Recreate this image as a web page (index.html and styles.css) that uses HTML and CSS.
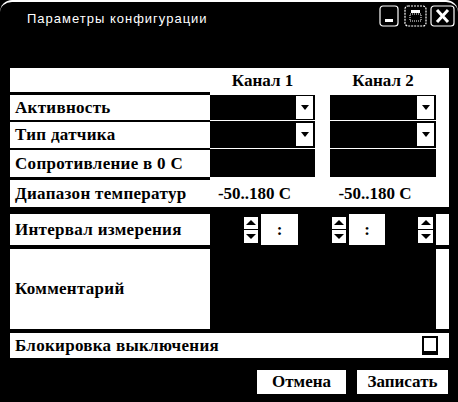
FILE: index.html
```html
<!DOCTYPE html>
<html lang="ru">
<head>
<meta charset="utf-8">
<title>Параметры конфигурации</title>
<link rel="stylesheet" href="styles.css">
</head>
<body>
<div class="window">
  <div class="titlebar">
    <span class="title">Параметры конфигурации</span>
    <div class="controls">
      <svg class="ctl ctl-min" width="20" height="22" viewBox="0 0 20 22">
        <rect x="1" y="1" width="18" height="20" rx="3" fill="none" stroke="#fff" stroke-width="1.2"/>
        <rect x="6" y="14" width="8" height="3" fill="#fff"/>
      </svg>
      <svg class="ctl ctl-max" width="23" height="22" viewBox="0 0 23 22">
        <rect x="1" y="1" width="21" height="20" rx="3" fill="none" stroke="#fff" stroke-width="1.2" stroke-dasharray="2 1"/>
        <rect x="7" y="5" width="9" height="3" fill="#fff"/>
        <rect x="6" y="9" width="11" height="7" fill="none" stroke="#fff" stroke-width="1" stroke-dasharray="1 1"/>
      </svg>
      <svg class="ctl ctl-close" width="25" height="22" viewBox="0 0 25 22">
        <rect x="1" y="1" width="23" height="20" rx="3" fill="none" stroke="#fff" stroke-width="1.2"/>
        <path d="M7 5 L18 17 M18 5 L7 17" stroke="#fff" stroke-width="3" fill="none"/>
      </svg>
    </div>
  </div>

  <div class="panel">
    <div class="row row-header">
      <div class="label"></div>
      <div class="fields pair">
        <span class="ch ch1">Канал 1</span>
        <span class="ch ch2">Канал 2</span>
      </div>
      <div class="strip"></div>
    </div>

    <div class="row row-combo first">
      <div class="label">Активность</div>
      <div class="fields pair">
        <div class="combo c1"><span class="drop"></span></div>
        <div class="combo c2"><span class="drop"></span></div>
      </div>
      <div class="strip"></div>
    </div>

    <div class="row row-combo">
      <div class="label">Тип датчика</div>
      <div class="fields pair">
        <div class="combo c1"><span class="drop"></span></div>
        <div class="combo c2"><span class="drop"></span></div>
      </div>
      <div class="strip"></div>
    </div>

    <div class="row row-combo tall">
      <div class="label">Сопротивление в 0 С</div>
      <div class="fields pair">
        <div class="combo c1"></div>
        <div class="combo c2"></div>
      </div>
      <div class="strip"></div>
    </div>

    <div class="row row-range">
      <div class="label">Диапазон температур</div>
      <div class="fields pair">
        <span class="ch val1">-50..180 C</span>
        <span class="ch val2">-50..180 C</span>
      </div>
      <div class="strip"></div>
    </div>

    <div class="row row-interval">
      <div class="label">Интервал измерения</div>
      <div class="fields time">
        <div class="spin s1"><span class="up"></span><span class="dn"></span></div>
        <div class="sep b1">:</div>
        <div class="spin s2"><span class="up"></span><span class="dn"></span></div>
        <div class="sep b2">:</div>
        <div class="spin s3"><span class="up"></span><span class="dn"></span></div>
      </div>
      <div class="strip"></div>
    </div>

    <div class="row row-comment">
      <div class="label">Комментарий</div>
      <div class="fields memo"></div>
      <div class="strip"></div>
    </div>

    <div class="row-lock">
      <div class="label">Блокировка выключения</div>
      <span class="check"></span>
    </div>
  </div>

  <div class="footer">
    <button class="btn btn-cancel">Отмена</button>
    <button class="btn btn-save">Записать</button>
  </div>
</div>
</body>
</html>
```

FILE: styles.css
```css
html, body {
  margin: 0;
  padding: 0;
  background: #000;
}

.window {
  width: 458px;
  height: 402px;
  box-sizing: border-box;
  background: #000;
  border-top: 2px solid #fff;
  border-radius: 12px 12px 0 0;
  display: flex;
  flex-direction: column;
  font-family: "Liberation Serif", "DejaVu Serif", "Noto Serif", serif;
  overflow: hidden;
}

.titlebar {
  height: 66px;
  box-sizing: border-box;
  padding: 3px 3px 0 27px;
  display: flex;
  justify-content: space-between;
  align-items: flex-start;
}

.title {
  margin-top: 6px;
  color: #fff;
  font-family: "Liberation Sans", Arial, sans-serif;
  font-size: 13px;
  letter-spacing: 1px;
  line-height: 15px;
}

.controls {
  display: flex;
  align-items: flex-start;
}

.ctl { display: block; }
.ctl-max { margin-left: 5px; }
.ctl-close { margin-left: 3px; }

.panel {
  margin-left: 10px;
  width: 439px;
  background: #fff;
}

.row {
  display: grid;
  grid-template-columns: 200px 226px 13px;
}

.label {
  display: flex;
  align-items: center;
  padding-left: 5px;
  box-sizing: border-box;
  font-family: "Liberation Serif", "DejaVu Serif", "Noto Serif", serif;
  font-weight: bold;
  font-size: 17px;
  letter-spacing: 0.3px;
  white-space: nowrap;
  color: #000;
}

.strip { background: #fff; }

/* header */
.row-header { height: 24px; }
.pair {
  display: flex;
  align-items: center;
}
.ch {
  font-family: "Liberation Serif", "DejaVu Serif", "Noto Serif", serif;
  font-weight: bold;
  font-size: 17px;
  text-align: center;
  white-space: nowrap;
}
.ch1, .val1 { width: 105px; }
.ch2, .val2 { width: 106px; margin-left: 15px; }
.row-header .ch { padding-top: 2px; }

/* combo rows */
.row-combo { height: 28px; }
.row-combo .label { border-top: 2px solid #000; }
.row-combo .fields { padding-top: 1px; align-items: stretch; }
.row-combo.first .label { border-top-width: 3px; }
.row-combo.first .fields { padding-top: 3px; }
.row-combo.tall { height: 29px; }

.combo {
  background: #000;
  display: flex;
  align-items: center;
  justify-content: flex-end;
  box-sizing: border-box;
  padding-right: 2px;
}
.combo.c1 { width: 105px; }
.combo.c2 { width: 106px; margin-left: 15px; }

.drop {
  width: 17px;
  height: 23px;
  background: #fff;
  display: flex;
  align-items: center;
  justify-content: center;
}
.drop::before {
  content: "";
  border-left: 4px solid transparent;
  border-right: 4px solid transparent;
  border-top: 5px solid #000;
}

/* range row */
.row-range { height: 30px; }
.row-range .label { border-top: 3px solid #000; }
.row-range .fields { padding-top: 3px; }
.val1 { margin-left: -8px; }

/* interval row */
.row-interval {
  height: 38px;
  border-top: 7px solid #000;
  box-sizing: border-box;
}
.time {
  background: #000;
  display: flex;
  align-items: center;
}
.spin {
  width: 14px;
  height: 26px;
  background: #fff;
  display: flex;
  flex-direction: column;
}
.spin .up, .spin .dn {
  flex: 1;
  display: flex;
  align-items: center;
  justify-content: center;
}
.spin .up { border-bottom: 1px solid #000; }
.spin .up::before {
  content: "";
  border-left: 5px solid transparent;
  border-right: 5px solid transparent;
  border-bottom: 5px solid #000;
}
.spin .dn::before {
  content: "";
  border-left: 5px solid transparent;
  border-right: 5px solid transparent;
  border-top: 5px solid #000;
}
.s1 { margin-left: 34px; }
.s2 { margin-left: 34px; }
.s3 { margin-left: 33px; width: 15px; }

.sep {
  align-self: stretch;
  background: #fff;
  margin-left: 3px;
  display: flex;
  align-items: center;
  justify-content: center;
  font-weight: bold;
  font-size: 17px;
}
.b1 { width: 37px; }
.b2 { width: 36px; }

/* comment row */
.row-comment {
  height: 84px;
  border-top: 4px solid #000;
  box-sizing: border-box;
}
.memo { background: #000; }

/* lock row */
.row-lock {
  height: 29px;
  border-top: 4px solid #000;
  box-sizing: border-box;
  display: flex;
  align-items: center;
  justify-content: space-between;
}
.row-lock .label { height: 100%; }
.check {
  width: 16px;
  height: 19px;
  box-sizing: border-box;
  border: 2px solid #000;
  border-bottom-width: 4px;
  background: #fff;
  margin-right: 11px;
}

/* footer */
.footer {
  flex: 1;
  display: flex;
  justify-content: flex-end;
  align-items: flex-start;
  padding: 12px 10px 0 0;
  gap: 11px;
}
.btn {
  height: 24px;
  border: none;
  background: #fff;
  color: #000;
  font-family: "Liberation Serif", "DejaVu Serif", "Noto Serif", serif;
  font-weight: bold;
  font-size: 17px;
  padding: 0;
  margin: 0;
}
.btn-cancel { width: 89px; }
.btn-save { width: 91px; }
```
